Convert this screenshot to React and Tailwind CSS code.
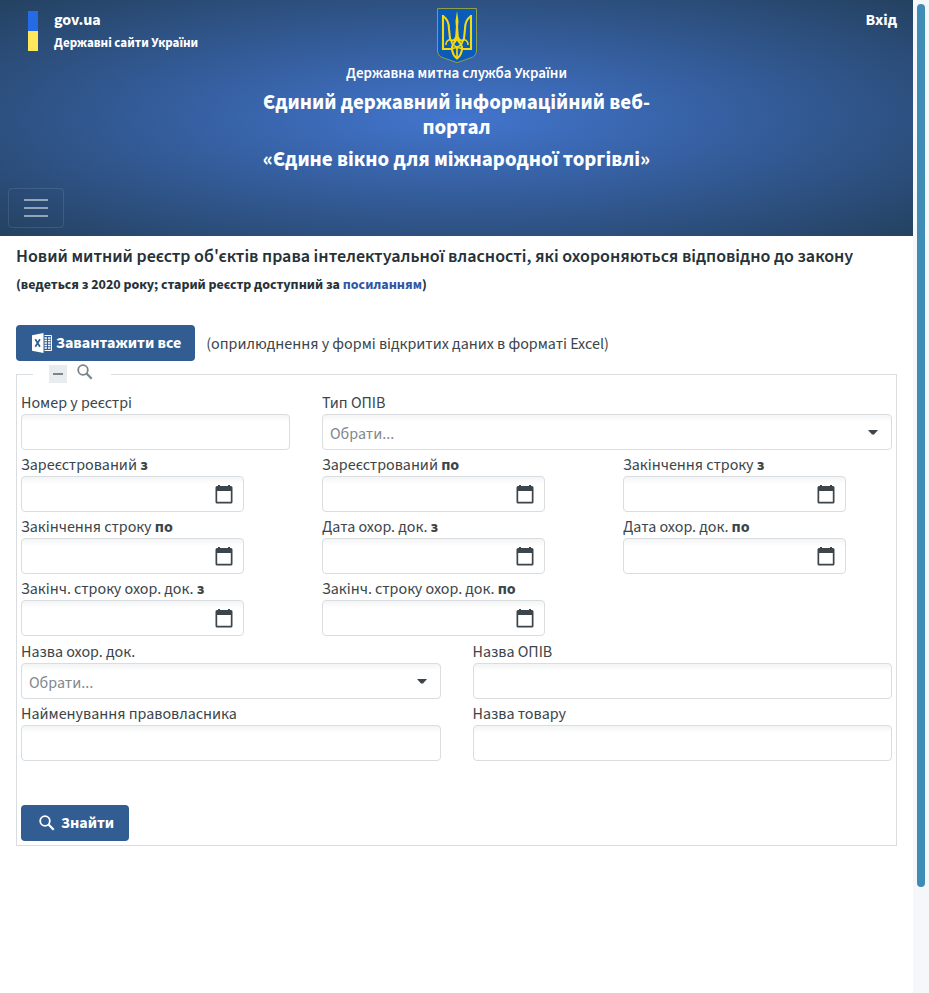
import { useState } from 'react';

const INPUT =
  'h-9 w-full rounded border border-[#d9dde0] bg-white bg-linear-to-b from-[#f3f4f5] to-white to-[7px] px-2 text-[#3b454b] outline-none focus:border-[#325d92]';

function Emblem() {
  return (
    <svg width="42" height="58" viewBox="0 1 42 58" role="img" aria-label="Герб України" className="block">
      <path d="M1.500 1.500H40.500V44Q40.500 48.500 36.500 50.200L21 55.700L5.500 50.200Q1.500 48.500 1.500 44Z" fill="#0a5cb8" stroke="#8f9f48" strokeWidth="1" />
      <g fill="none" stroke="#f5d90f" strokeWidth="2.100">
        <path d="M13.800 32.500C11 33.500 9.800 35.500 10 38M28.200 32.500C31 33.500 32.200 35.500 32 38" strokeWidth="1.500" />
        <path d="M7 8V42H16.500M35 8V42H25.500" />
        <path d="M7 9C11.500 12 13 17 13 22L14 31.500C14.500 34.500 19 34.500 20 30M35 9C30.500 12 29 17 29 22L28 31.500C27.500 34.500 23 34.500 22 30" />
        <path d="M21 51.500C17 48.500 16 44 16 41C16 37.500 19 35 21 32C23 35 26 37.500 26 41C26 44 25 48.500 21 51.500Z" />
        <path d="M15 33C15.500 38 18.500 40.500 26 41.500M27 33C26.500 38 23.500 40.500 16 41.500M21 41V51" strokeWidth="1.700" />
      </g>
      <path d="M21 4L22.500 14L22.100 20L23 32H19L19.900 20L19.500 14Z" fill="#f5d90f" />
    </svg>
  );
}

function ExcelIcon() {
  return (
    <svg width="20" height="20" viewBox="0 0 20 20" aria-hidden="true">
      <path d="M0 2.200L11.500 0V20L0 17.800Z" fill="#fff" />
      <path d="M3.300 6.300L8 13.700M8 6.300L3.300 13.700" stroke="#325d92" strokeWidth="1.700" />
      <path d="M12.500 2.500H19.500V17.500H12.500" fill="none" stroke="#fff" strokeWidth="1" />
      <path d="M12.500 5H15M16 5H18.500M12.500 7.500H15M16 7.500H18.500M12.500 10H15M16 10H18.500M12.500 12.500H15M16 12.500H18.500M12.500 15H15M16 15H18.500" stroke="#fff" strokeWidth="1.500" />
    </svg>
  );
}

function SearchIcon({ className }) {
  return (
    <svg width="16" height="16" viewBox="0 0 16 16" fill="none" stroke="currentColor" aria-hidden="true" className={className}>
      <circle cx="6" cy="6" r="4.800" strokeWidth="1.800" />
      <path d="M9.500 9.500L14.700 14.700" strokeWidth="2.300" />
    </svg>
  );
}

function CalendarIcon() {
  return (
    <svg width="18" height="19" viewBox="0 0 18 19" fill="#3b454b" aria-hidden="true">
      <path d="M3 0H5V1H13V0H15V1H16Q17.500 1 17.500 2.500V17Q17.500 18.500 16 18.500H2Q.500 18.500 .500 17V2.500Q.500 1 2 1H3ZM2.200 6V16.800H15.800V6Z" fillRule="evenodd" />
    </svg>
  );
}

function Label({ id, text, strong }) {
  return (
    <label htmlFor={id} className="block h-[26px] pt-[3px] leading-6 whitespace-nowrap">
      {text}
      {strong && <b> {strong}</b>}
    </label>
  );
}

function TextField({ id, text }) {
  return (
    <div>
      <Label id={id} text={text} />
      <input id={id} type="text" className={INPUT} />
    </div>
  );
}

function DateField({ id, text, strong }) {
  return (
    <div>
      <Label id={id} text={text} strong={strong} />
      <div className="flex h-9 w-[223px] items-center rounded border border-[#d9dde0] bg-linear-to-b from-[#f3f4f5] to-white to-[7px] pr-2.5">
        <input id={id} type="text" className="h-full min-w-0 flex-1 bg-transparent px-2 outline-none" />
        <button type="button" aria-label="Обрати дату" className="cursor-pointer">
          <CalendarIcon />
        </button>
      </div>
    </div>
  );
}

function SelectField({ id, text }) {
  return (
    <div>
      <Label id={id} text={text} />
      <div className="relative">
        <select id={id} className="h-9 w-full appearance-none rounded border border-[#d9dde0] bg-white bg-linear-to-b from-[#f3f4f5] to-white to-[7px] px-[7px] pt-1 text-[#7f888d] outline-none">
          <option>Обрати...</option>
        </select>
        <svg width="10" height="5" viewBox="0 0 10 5" aria-hidden="true" className="pointer-events-none absolute top-4 right-3.5">
          <path d="M0 0H10L6 4.500H4Z" fill="#3b454b" />
        </svg>
      </div>
    </div>
  );
}

function Header() {
  return (
    <header className="bg-[radial-gradient(#4275ce,#244160)] px-2 pt-2 pb-2 font-bold text-white">
      <div className="grid grid-cols-[1fr_400px_1fr] items-start">
        <a href="#gov" className="flex gap-4 pt-[3px] pl-5">
          <span className="flex w-2.5 flex-col" aria-hidden="true">
            <span className="h-5 bg-[#256be6]" />
            <span className="h-5 bg-[#ffe65a]" />
          </span>
          <span className="flex flex-col whitespace-nowrap">
            <span className="text-base leading-[18px]">gov.ua</span>
            <span className="pt-1 text-[13px] leading-5">Державні сайти України</span>
          </span>
        </a>
        <div className="flex flex-col items-center text-center">
          <Emblem />
          <div className="text-[15px] leading-4 font-semibold">Державна митна служба України</div>
          <h1 className="pt-2 text-[21px] leading-[25px] font-bold">
            Єдиний державний інформаційний веб-портал
            <span className="block pt-[7px]">«Єдине вікно для міжнародної торгівлі»</span>
          </h1>
        </div>
        <a href="#login" className="justify-self-end pr-2 leading-6">Вхід</a>
      </div>
      <button type="button" aria-label="Меню" className="mt-4 flex h-10 w-14 items-center justify-center rounded border border-white/10">
        <svg width="24" height="18" viewBox="0 0 24 18" stroke="#fff" strokeOpacity=".5" strokeWidth="2" aria-hidden="true">
          <path d="M0 1H24M0 9H24M0 17H24" />
        </svg>
      </button>
    </header>
  );
}

export default function App() {
  const [open, setOpen] = useState(true);
  return (
    <div className="flex min-h-screen bg-white font-['Source_Sans_3','Source_Sans_Pro','Noto_Sans',sans-serif] text-base text-[#3b454b]">
      <div className="min-w-0 flex-1">
        <Header />
        <main className="px-4 pt-[9px]">
          <h2 className="text-lg leading-6 font-semibold text-[#263238]">
            Новий митний реєстр об'єктів права інтелектуальної власності, які охороняються відповідно до закону
          </h2>
          <p className="pt-1.5 text-sm leading-5 font-bold text-[#263238]">
            (ведеться з 2020 року; старий реєстр доступний за{' '}
            <a href="#old" className="text-[#2f57a5]">посиланням</a>)
          </p>
          <div className="flex items-center gap-[11px] pt-[30px]">
            <button type="button" className="flex h-9 items-center gap-1 rounded bg-[#325d92] pr-3.5 pl-4 font-bold text-white">
              <ExcelIcon />
              Завантажити все
            </button>
            <span className="pt-0.5">(оприлюднення у формі відкритих даних в форматі Excel)</span>
          </div>
          <fieldset className="border border-[#d9dde0] px-1 pb-1">
            <legend className="ml-3 flex h-[26px] items-center gap-2.5 pr-[18px] pl-4 text-[#7a858b]">
              <button type="button" aria-label="Згорнути" onClick={() => setOpen(!open)} className="flex size-[18px] items-center justify-center bg-[#e8ecef]">
                <span className="h-0.5 w-2.5 bg-[#7a858b]" />
              </button>
              <SearchIcon className="mb-1" />
            </legend>
            {open && (
              <form className="pt-px">
                <div className="grid grid-cols-3 gap-x-8">
                  <TextField id="num" text="Номер у реєстрі" />
                  <div className="col-span-2">
                    <SelectField id="type" text="Тип ОПІВ" />
                  </div>
                  <DateField id="regFrom" text="Зареєстрований" strong="з" />
                  <DateField id="regTo" text="Зареєстрований" strong="по" />
                  <DateField id="endFrom" text="Закінчення строку" strong="з" />
                  <DateField id="endTo" text="Закінчення строку" strong="по" />
                  <DateField id="docFrom" text="Дата охор. док." strong="з" />
                  <DateField id="docTo" text="Дата охор. док." strong="по" />
                  <DateField id="docEndFrom" text="Закінч. строку охор. док." strong="з" />
                  <DateField id="docEndTo" text="Закінч. строку охор. док." strong="по" />
                </div>
                <div className="grid grid-cols-2 gap-x-8 pt-px">
                  <SelectField id="docName" text="Назва охор. док." />
                  <TextField id="objName" text="Назва ОПІВ" />
                  <TextField id="owner" text="Найменування правовласника" />
                  <TextField id="goods" text="Назва товару" />
                </div>
                <button type="button" className="mt-11 flex h-9 items-center gap-1.5 rounded bg-[#325d92] pr-[15px] pl-[18px] font-bold text-white">
                  <SearchIcon />
                  Знайти
                </button>
              </form>
            )}
          </fieldset>
        </main>
      </div>
      <div className="sticky top-0 h-screen w-4 bg-[#f5f7fb] px-1 pt-1" aria-hidden="true">
        <div className="h-[calc(100%-106px)] rounded-full bg-[#3f8db5]" />
      </div>
    </div>
  );
}
